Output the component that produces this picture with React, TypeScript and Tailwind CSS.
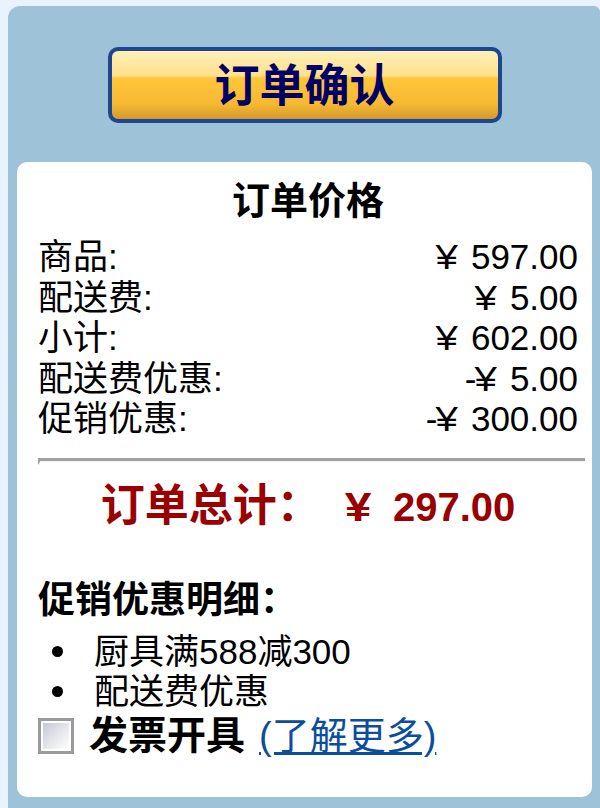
import React from "react";

const font = { fontFamily: '"Liberation Sans", "Noto Sans CJK SC", sans-serif' };

const rows = [
  { label: "商品:", sign: "", value: "597.00" },
  { label: "配送费:", sign: "", value: "5.00" },
  { label: "小计:", sign: "", value: "602.00" },
  { label: "配送费优惠:", sign: "-", value: "5.00" },
  { label: "促销优惠:", sign: "-", value: "300.00" },
];

export default function App() {
  return (
    <div
      className="w-[600px] h-[808px] bg-[#eaf2fd] pt-[6px] pl-[8px] overflow-hidden text-black"
      style={font}
    >
      <div className="h-[802px] w-[592px] rounded-tl-[12px] rounded-tr-[6px] bg-[#9ec3d9] flex flex-col pl-[9px] pr-[8px] pb-[11px]">
        {/* confirm button */}
        <button className="mt-[41px] mx-auto w-[394px] h-[76px] rounded-[10px] border-[4px] border-[#1d4690] bg-[linear-gradient(to_bottom,#fff0b8_0%,#ffe08c_36%,#ffc73a_40%,#f6b931_78%,#d29a2c_100%)] flex items-center justify-center">
          <span className="text-[45px] leading-none font-bold text-[#000066] mt-[2px]">订单确认</span>
        </button>

        {/* price panel */}
        <div className="mt-[39px] flex-1 rounded-[10px] bg-white pl-[21px] pr-[7px] pt-[17px]">
          <div className="text-center text-[38px] leading-[44px] font-bold pr-[7px]">订单价格</div>

          <div className="mt-[14px] pr-[7px]">
            {rows.map((r) => (
              <div key={r.label} className="flex justify-between text-[35px] leading-[40.5px]">
                <span>{r.label}</span>
                <span>
                  {r.sign}
                  <span className="inline-block mr-[14px] scale-x-[1.15]">¥</span>
                  {r.value}
                </span>
              </div>
            ))}
          </div>

          {/* divider */}
          <div className="mt-[18px] h-[7px] border-t-[3px] border-l-[2px] border-[#a0a0a0] bg-[#f2f2f2] border-b-[3px] border-b-white" />

          <div className="mt-[17px] h-[48px] flex items-baseline justify-center font-bold text-[#990000] pr-[7px] leading-[48px]">
            <span className="text-[44px]">订单总计：</span>
            <span className="text-[40px] ml-[26px] inline-block scale-x-[1.2]">¥</span>
            <span className="text-[40px] ml-[24px]">297.00</span>
          </div>

          <div className="mt-[50px] text-[37px] leading-[42px] font-bold">促销优惠明细：</div>

          <ul className="mt-[10px] text-[35px] leading-[40px]">
            <li className="flex items-center">
              <span className="w-[11px] h-[11px] rounded-full bg-black ml-[14px] mr-[31px]" />
              <span>厨具满588减300</span>
            </li>
            <li className="flex items-center">
              <span className="w-[11px] h-[11px] rounded-full bg-black ml-[14px] mr-[31px]" />
              <span>配送费优惠</span>
            </li>
          </ul>

          <div className="mt-[2px] flex items-center">
            <span className="w-[36px] h-[36px] border-[3px] border-[#9a9a9a] p-[2px] bg-white shrink-0">
              <span className="block w-full h-full bg-[linear-gradient(135deg,#c5c9d3_0%,#e6e8ec_55%,#ffffff_100%)]" />
            </span>
            <span className="ml-[15px] text-[39px] leading-[44px] font-bold">发票开具</span>
            <a className="ml-[14px] text-[38px] leading-[44px] text-[#0b4e9c] underline underline-offset-[3px]" href="#">
              (了解更多)
            </a>
          </div>
        </div>
      </div>
    </div>
  );
}
